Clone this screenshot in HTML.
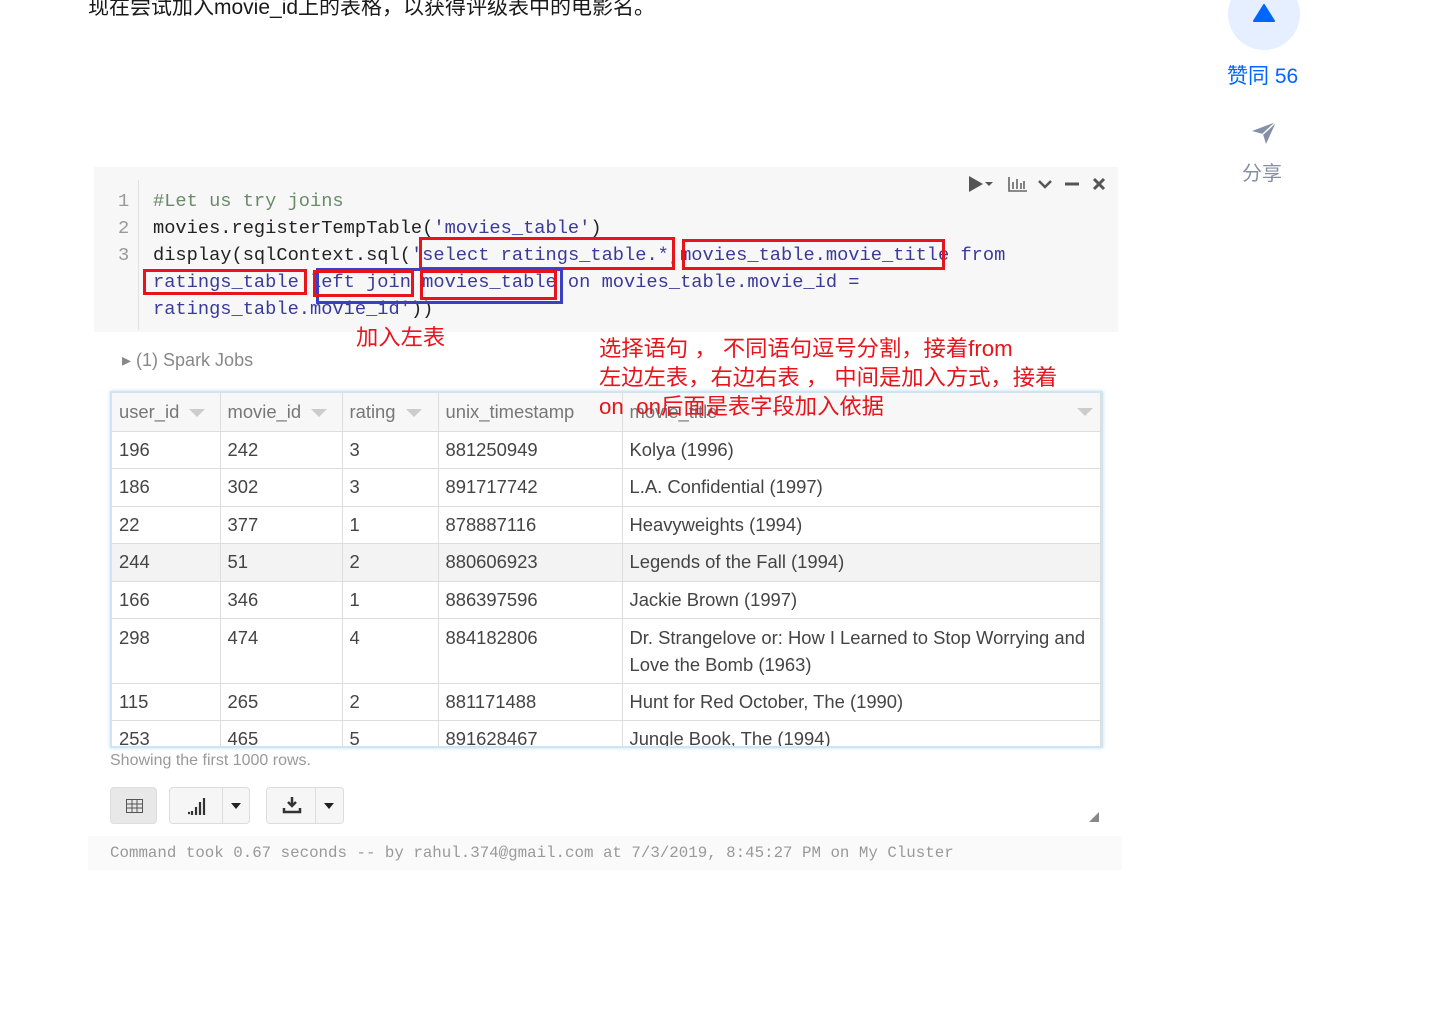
<!DOCTYPE html>
<html><head><meta charset="utf-8"><style>
*{margin:0;padding:0;box-sizing:border-box}
body{width:1453px;height:1012px;background:#fff;position:relative;overflow:hidden;font-family:"Liberation Sans","Noto Sans CJK SC",sans-serif}
.a{position:absolute}
.top{left:88px;top:-9px;font-size:21px;color:#1a1a1a;white-space:nowrap}
.code{left:94px;top:167px;width:1024px;height:165px;background:#f7f7f8}
.gut{left:138px;top:180px;width:1px;height:150px;background:#e2e2e2}
.ln{left:118px;font:18.7px "Liberation Mono",monospace;color:#999}
.cl{left:153px;font:18.7px "Liberation Mono",monospace;color:#222;white-space:pre}
.s{color:#3a3a9a}.c{color:#6a8a6a}
.box{position:absolute;border:3px solid #e8141c}
.bb{position:absolute;border:3px solid #3b3fc4}
.red{color:#e8141c;font-family:"Liberation Sans","Noto Sans CJK SC",sans-serif;font-size:22.3px;white-space:nowrap}
.tw{position:absolute;left:110px;top:391px;width:993px;height:357px;overflow:hidden;border:2px solid #cfe6f2;box-shadow:0 0 4px #bfe0f0}
table{width:100%;border-collapse:collapse;font-size:18.4px;color:#444;table-layout:fixed}
td,th{border:1px solid #ddd;padding:0 7px;text-align:left;vertical-align:top;height:37.4px;line-height:35px;font-weight:normal;overflow:hidden;white-space:nowrap}
th{background:#f7f7f7;color:#777;height:38px;line-height:38px;border-top:none}
tr td:first-child,tr th:first-child{border-left:none}
.tri{display:inline-block;width:0;height:0;border-left:8px solid transparent;border-right:8px solid transparent;border-top:8px solid #ccc;margin-left:10px;vertical-align:middle}
.btn{position:absolute;top:787px;height:37px;border:1px solid #ddd;border-radius:4px;background:#f6f6f6}
</style></head><body>
<div class="a top">现在尝试加入movie_id上的表格，以获得评级表中的电影名。</div>

<div class="a" style="left:1228px;top:-22px;width:72px;height:72px;border-radius:50%;background:#e5efff"></div>
<svg class="a" style="left:1252px;top:3px" width="24" height="20"><path d="M12 2 L22 18 L2 18 Z" fill="#0066ff" stroke="#0066ff" stroke-linejoin="round" stroke-width="2"/></svg>
<div class="a" style="left:1227px;top:60px;font-size:21px;color:#0066ff">赞同 56</div>
<svg class="a" style="left:1250px;top:120px" width="28" height="26"><path d="M2 11 L26 2 L16 24 L13 14 Z" fill="#8590a6"/><path d="M13 14 L26 2" stroke="#fff" stroke-width="1.5"/></svg>
<div class="a" style="left:1242px;top:157px;font-size:20px;color:#8590a6">分享</div>

<div class="a code"></div>
<div class="a gut"></div>
<div class="a ln" style="top:190px">1</div>
<div class="a ln" style="top:217px">2</div>
<div class="a ln" style="top:244px">3</div>
<div class="a cl c" style="top:190px">#Let us try joins</div>
<div class="a cl" style="top:217px">movies.registerTempTable(<span class="s">'movies_table'</span>)</div>
<div class="a cl" style="top:244px">display(sqlContext.sql(<span class="s">'select ratings_table.*,movies_table.movie_title from</span></div>
<div class="a cl s" style="top:271px">ratings_table left join movies_table on movies_table.movie_id =</div>
<div class="a cl s" style="top:298px">ratings_table.movie_id'<span style="color:#222">))</span></div>
<svg class="a" style="left:966px;top:174px" width="145" height="20">
<path d="M3 2 L17 10 L3 18 Z" fill="#555"/><path d="M19 8 L23 12 L27 8 Z" fill="#555"/>
<path d="M43 3 V17 H61 M47 8 V15 M51 5 V15 M55 9 V15 M58 7 V15" stroke="#666" stroke-width="1.6" fill="none"/>
<path d="M73 7 L79 13 L85 7" stroke="#555" stroke-width="2.5" fill="none"/>
<path d="M99 10 H113" stroke="#555" stroke-width="3"/>
<path d="M128 5 L138 15 M138 5 L128 15" stroke="#555" stroke-width="3"/></svg>

<div class="box" style="left:419px;top:237px;width:256px;height:33px"></div>
<div class="box" style="left:682px;top:239px;width:263px;height:31px"></div>
<div class="box" style="left:143px;top:269px;width:164px;height:26px"></div>
<div class="bb" style="left:316px;top:268px;width:247px;height:36px"></div>
<div class="box" style="left:313px;top:270px;width:101px;height:27px"></div>
<div class="box" style="left:420px;top:270px;width:137px;height:30px"></div>

<div class="a red" style="left:356px;top:320px">加入左表</div>
<div class="a" style="left:122px;top:350px;font-size:18px;color:#888">▸ (1) Spark Jobs</div>

<div class="tw"><table>
<tr><th style="width:108px">user_id<span class="tri"></span></th><th style="width:122px">movie_id<span class="tri"></span></th><th style="width:96px">rating<span class="tri"></span></th><th style="width:184px">unix_timestamp</th><th>movie_title<span class="tri" style="float:right;margin-top:15px"></span></th></tr>
<tr><td>196</td><td>242</td><td>3</td><td>881250949</td><td>Kolya (1996)</td></tr>
<tr><td>186</td><td>302</td><td>3</td><td>891717742</td><td>L.A. Confidential (1997)</td></tr>
<tr><td>22</td><td>377</td><td>1</td><td>878887116</td><td>Heavyweights (1994)</td></tr>
<tr style="background:#f3f3f3"><td>244</td><td>51</td><td>2</td><td>880606923</td><td>Legends of the Fall (1994)</td></tr>
<tr><td>166</td><td>346</td><td>1</td><td>886397596</td><td>Jackie Brown (1997)</td></tr>
<tr><td style="height:65px;line-height:27px;padding-top:5px">298</td><td style="line-height:27px;padding-top:5px">474</td><td style="line-height:27px;padding-top:5px">4</td><td style="line-height:27px;padding-top:5px">884182806</td><td style="line-height:27px;padding-top:5px;white-space:normal">Dr. Strangelove or: How I Learned to Stop Worrying and Love the Bomb (1963)</td></tr>
<tr><td>115</td><td>265</td><td>2</td><td>881171488</td><td>Hunt for Red October, The (1990)</td></tr>
<tr><td>253</td><td>465</td><td>5</td><td>891628467</td><td>Jungle Book, The (1994)</td></tr>
</table></div>

<div class="a red" style="left:599px;top:334px;line-height:29px">选择语句 ， 不同语句逗号分割，接着from<br>左边左表，右边右表 ， 中间是加入方式，接着<br>on&nbsp;&nbsp;on后面是表字段加入依据</div>

<div class="a" style="left:110px;top:752px;font-size:16px;color:#999">Showing the first 1000 rows.</div>
<div class="btn" style="left:110px;width:47px;background:#e8e8e8">
<svg class="a" style="left:15px;top:11px" width="17" height="14"><rect x="0.5" y="0.5" width="16" height="13" fill="none" stroke="#555"/><path d="M0 5 H17 M0 9 H17 M6 0 V14 M11 0 V14" stroke="#555"/></svg></div>
<div class="btn" style="left:169px;width:81px">
<svg class="a" style="left:16px;top:9px" width="20" height="18"><path d="M2 16 h2 M6 14 v4 M10 10 v8 M14 5 v13 M18 1 v17" stroke="#333" stroke-width="2.2"/></svg>
<span class="a" style="left:52px;top:0;width:1px;height:35px;background:#ddd"></span>
<svg class="a" style="left:60px;top:14px" width="12" height="8"><path d="M1 1 H11 L6 7 Z" fill="#222"/></svg></div>
<div class="btn" style="left:266px;width:78px">
<svg class="a" style="left:15px;top:8px" width="20" height="18"><path d="M10 1 V10 M6 6 L10 10 L14 6" stroke="#333" stroke-width="2.5" fill="none"/><path d="M2 12 V16 H18 V12" stroke="#333" stroke-width="2.5" fill="none"/></svg>
<span class="a" style="left:48px;top:0;width:1px;height:35px;background:#ddd"></span>
<svg class="a" style="left:56px;top:14px" width="12" height="8"><path d="M1 1 H11 L6 7 Z" fill="#222"/></svg></div>
<div class="a" style="left:1089px;top:812px;width:0;height:0;border-left:10px solid transparent;border-bottom:10px solid #888"></div>
<div class="a" style="left:88px;top:836px;width:1034px;height:34px;background:#fafafa"></div>
<div class="a" style="left:110px;top:844px;font:15.8px 'Liberation Mono',monospace;color:#999;white-space:pre">Command took 0.67 seconds -- by rahul.374@gmail.com at 7/3/2019, 8:45:27 PM on My Cluster</div>
</body></html>
